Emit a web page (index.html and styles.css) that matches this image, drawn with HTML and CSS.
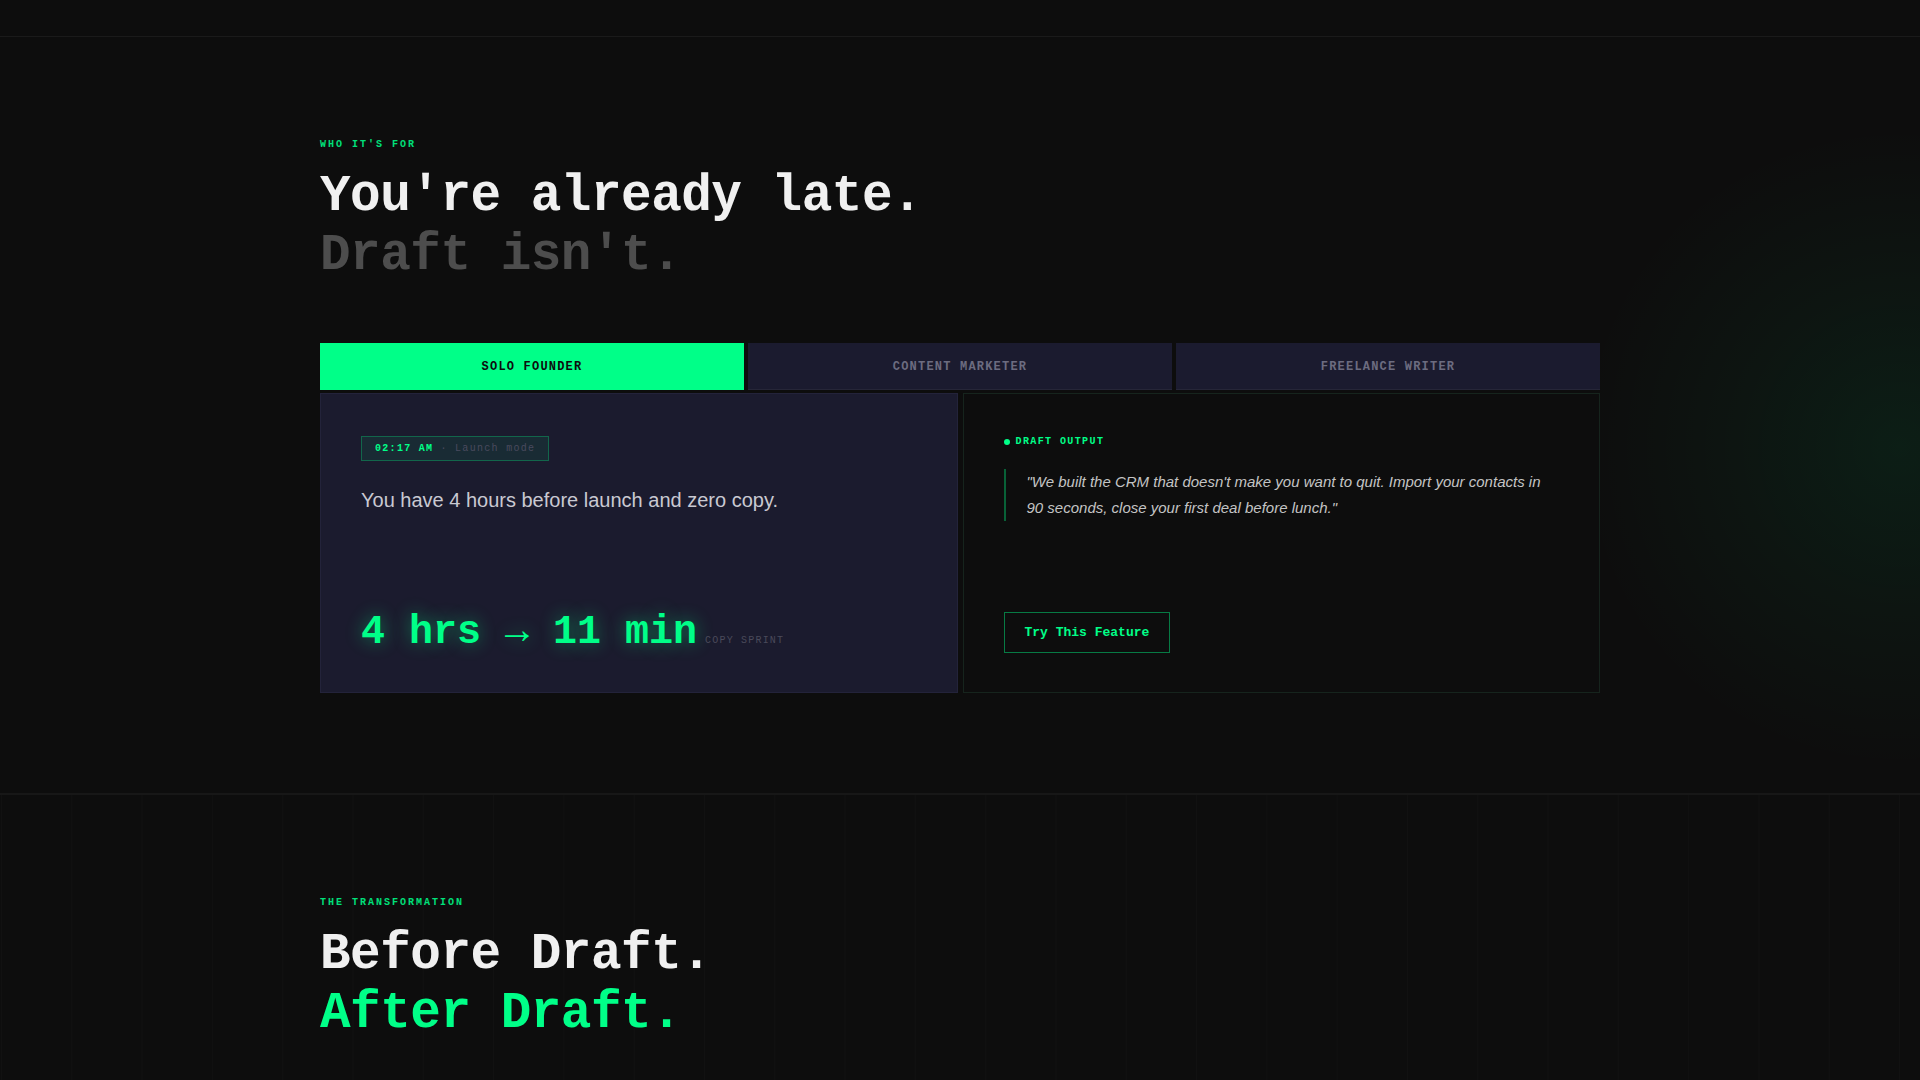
FILE: index.html
```html
<!DOCTYPE html>
<html lang="en">
<head>
<meta charset="utf-8">
<title>Draft — Who it's for</title>
<link rel="stylesheet" href="styles.css">
</head>
<body>
<div class="topbar"></div>
<section class="section who">
  <div class="glow"></div>
  <div class="container">
    <div class="eyebrow">WHO IT'S FOR</div>
    <h2 class="headline"><span class="line-a">You're already late.</span><span class="line-b">Draft isn't.</span></h2>
    <div class="tabs">
      <div class="tab active">SOLO FOUNDER</div>
      <div class="tab">CONTENT MARKETER</div>
      <div class="tab">FREELANCE WRITER</div>
    </div>
    <div class="panels">
      <div class="panel panel-story">
        <div class="story-top">
          <div class="badge"><span class="badge-time">02:17 AM</span><span class="badge-mode">· Launch mode</span></div>
          <p class="story">You have 4 hours before launch and zero copy.</p>
        </div>
        <div class="metric"><span class="metric-value">4 hrs → 11 min</span><span class="metric-label">COPY SPRINT</span></div>
      </div>
      <div class="panel panel-output">
        <div class="output-top">
          <div class="output-label"><span class="dot"></span>DRAFT OUTPUT</div>
          <blockquote class="quote">"We built the CRM that doesn't make you want to quit. Import your contacts in 90 seconds, close your first deal before lunch."</blockquote>
        </div>
        <div><span class="btn">Try This Feature</span></div>
      </div>
    </div>
  </div>
</section>
<section class="section transform">
  <div class="container">
    <div class="eyebrow">THE TRANSFORMATION</div>
    <h2 class="headline"><span class="line-a">Before Draft.</span><span class="line-g">After Draft.</span></h2>
  </div>
</section>
</body>
</html>
```

FILE: styles.css
```css
* { box-sizing: border-box; }
html, body { margin: 0; padding: 0; }
body {
  background: #0d0d0d;
  color: #f0f0f0;
  font-family: "Liberation Mono", "DejaVu Sans Mono", monospace;
  overflow: hidden;
}
.topbar {
  height: 37px;
  border-bottom: 1px solid #1a1a1a;
}
.section {
  position: relative;
  padding: 101px 0 100px;
  overflow: hidden;
}
.who { border-bottom: 2px solid #171717; }
.transform {
  background-image: linear-gradient(90deg, rgba(255,255,255,0.014) 1px, transparent 1px);
  background-size: 70.3px 100%;
  background-position: 1px 0;
  min-height: 400px;
}
.glow {
  position: absolute;
  right: -330px;
  top: 60px;
  width: 700px;
  height: 700px;
  border-radius: 50%;
  background: radial-gradient(circle, rgba(0,255,136,0.07) 0%, rgba(0,255,136,0.03) 35%, rgba(0,255,136,0) 65%);
  pointer-events: none;
}
.container {
  position: relative;
  width: 1280px;
  margin: 0 auto;
}
.eyebrow {
  font-size: 10px;
  font-weight: 700;
  letter-spacing: 0.2em;
  color: #00e07a;
  line-height: 14px;
}
.headline {
  margin: 15px 0 0;
  font-size: 51px;
  line-height: 59px;
  font-weight: 700;
  letter-spacing: -0.5px;
}
.headline span { display: block; }
.line-a { color: #f0f0f0; }
.line-b { color: #4d4d4d; }
.line-g { color: #00ff88; }
.tabs {
  margin-top: 58px;
  display: grid;
  grid-template-columns: repeat(3, 1fr);
  gap: 4px;
}
.tab {
  height: 47px;
  display: flex;
  align-items: center;
  justify-content: center;
  background: #1b1b2f;
  color: #6c6c80;
  font-size: 12px;
  font-weight: 700;
  letter-spacing: 0.1em;
  padding-top: 1px;
  border-bottom: 1px solid #262638;
}
.tab.active {
  background: #00ff88;
  color: #0d0d0d;
  border-bottom-color: #00ff88;
}
.panels {
  margin-top: 3px;
  display: grid;
  grid-template-columns: 1fr 1fr;
  gap: 5px;
  height: 300px;
}
.panel {
  padding: 42px 40px 35px;
  display: flex;
  flex-direction: column;
  justify-content: space-between;
}
.panel-story {
  background: #1b1b2e;
  border: 1px solid #23233a;
}
.panel-output {
  background: #0d0d0d;
  border: 1px solid #16241d;
  padding-top: 41px;
  padding-bottom: 39px;
}
.badge {
  display: inline-flex;
  align-items: center;
  height: 25px;
  padding: 0 13px;
  background: rgba(0,255,136,0.07);
  border: 1px solid rgba(0,255,136,0.28);
  font-size: 10px;
  letter-spacing: 0.13em;
}
.badge-time { color: #00ff88; font-weight: 700; }
.badge-mode { color: #4a4a5e; margin-left: 7px; }
.story {
  margin: 24px 0 0;
  font-family: "Liberation Sans", Arial, sans-serif;
  font-size: 20px;
  line-height: 30px;
  color: #c9c9d2;
}
.metric {
  display: flex;
  align-items: baseline;
  gap: 8px;
}
.metric-value {
  font-size: 40px;
  line-height: 48px;
  font-weight: 700;
  color: #00ff88;
  text-shadow: 0 0 18px rgba(0,255,136,0.45);
}
.metric-label {
  font-size: 10px;
  letter-spacing: 0.12em;
  color: #4a4a5a;
}
.output-label {
  display: flex;
  align-items: center;
  font-size: 10px;
  font-weight: 700;
  letter-spacing: 0.14em;
  color: #00ff88;
  line-height: 14px;
}
.dot {
  width: 6px;
  height: 6px;
  border-radius: 50%;
  background: #00ff88;
  margin-right: 6px;
}
.quote {
  margin: 20px 0 0;
  padding: 0 0 0 21px;
  border-left: 2px solid rgba(0,255,136,0.35);
  font-family: "Liberation Sans", Arial, sans-serif;
  font-style: italic;
  font-size: 15px;
  line-height: 26px;
  color: #c4c4c4;
}
.btn {
  display: inline-block;
  padding: 12px 20px;
  border: 1px solid rgba(0,255,136,0.45);
  color: #00ff88;
  font-size: 13px;
  font-weight: 700;
  line-height: 15px;
}
```
